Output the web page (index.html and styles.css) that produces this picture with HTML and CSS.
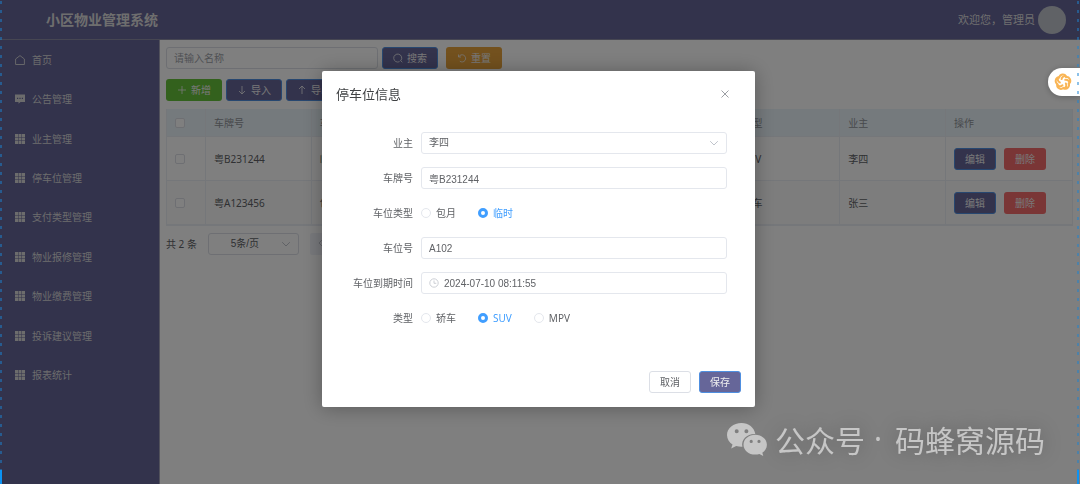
FILE: index.html
```html
<!DOCTYPE html>
<html lang="zh-CN">
<head>
<meta charset="utf-8">
<title>小区物业管理系统</title>
<link rel="stylesheet" href="styles.css">
</head>
<body>
<svg class="sprite" aria-hidden="true">
  <symbol id="grid" viewBox="0 0 10 10"><path fill="currentColor" d="M0 0h3v3H0zM3.5 0h3v3h-3zM7 0h3v3H7zM0 3.5h3v3H0zM3.5 3.5h3v3h-3zM7 3.5h3v3H7zM0 7h3v3H0zM3.5 7h3v3h-3zM7 7h3v3H7z"/></symbol>
  <symbol id="chevron" viewBox="0 0 10 10"><path d="M1.2 3.2 5 7l3.800-3.800" fill="none" stroke="currentColor"/></symbol>
</svg>
<div class="app">
  <header class="topbar">
    <h1 class="brand">小区物业管理系统</h1>
    <div class="user"><span>欢迎您，管理员</span><span class="avatar"></span></div>
  </header>
  <div class="body">
    <nav class="sidebar">
      <a href="#"><svg class="icon" viewBox="0 0 10 10"><path d="M.6 4 5 .6 9.400 4v5.500H.6z" fill="none" stroke="currentColor" stroke-width=".9" stroke-linejoin="round"/></svg>首页</a>
      <a href="#"><svg class="icon" viewBox="0 0 10 10"><path fill="currentColor" fill-rule="evenodd" d="M0 .5h10V8H5.500L3.500 9.800V8H0zM2 3.800v1.200h1.200V3.800zm2.400 0v1.200h1.200V3.800zm2.400 0v1.200H8V3.800z"/></svg>公告管理</a>
      <a href="#"><svg class="icon"><use href="#grid"/></svg>业主管理</a>
      <a href="#"><svg class="icon"><use href="#grid"/></svg>停车位管理</a>
      <a href="#"><svg class="icon"><use href="#grid"/></svg>支付类型管理</a>
      <a href="#"><svg class="icon"><use href="#grid"/></svg>物业报修管理</a>
      <a href="#"><svg class="icon"><use href="#grid"/></svg>物业缴费管理</a>
      <a href="#"><svg class="icon"><use href="#grid"/></svg>投诉建议管理</a>
      <a href="#"><svg class="icon"><use href="#grid"/></svg>报表统计</a>
    </nav>
    <main class="main">
      <div class="search">
        <input class="field search-field" type="text" placeholder="请输入名称" aria-label="名称">
        <button class="btn primary wide" type="button"><svg class="icon" viewBox="0 0 10 10"><path d="M6.600 8.600A4 4 0 1 1 7.900 7.500M7.300 7.300 9.300 9.300" fill="none" stroke="currentColor" stroke-width=".8"/></svg>搜索</button>
        <button class="btn warning wide reset" type="button"><svg class="icon" viewBox="0 0 10 10"><path d="M1.500 1.500v2.500h2.500M1.800 3.800A3.600 3.600 0 1 1 2.800 8.200" fill="none" stroke="currentColor" stroke-width=".8"/></svg>重置</button>
      </div>
      <div class="tools">
        <button class="btn success wide" type="button"><svg class="icon" viewBox="0 0 10 10"><path d="M5 1v8M1 5h8" stroke="currentColor" stroke-width=".8"/></svg>新增</button>
        <button class="btn primary wide" type="button"><svg class="icon" viewBox="0 0 10 10"><path d="M5 1v8M2 6l3 3 3-3" fill="none" stroke="currentColor" stroke-width=".8"/></svg>导入</button>
        <button class="btn primary wide" type="button"><svg class="icon" viewBox="0 0 10 10"><path d="M5 9V1M2 4l3-3 3 3" fill="none" stroke="currentColor" stroke-width=".8"/></svg>导出</button>
      </div>
      <table class="table">
        <colgroup><col class="c-check"><col><col><col><col><col><col><col><col class="c-ops"></colgroup>
        <thead><tr><th><input type="checkbox" aria-label="全选"></th><th>车牌号</th><th>车位类型</th><th></th><th></th><th></th><th>类型</th><th>业主</th><th>操作</th></tr></thead>
        <tbody>
          <tr><td><input type="checkbox" aria-label="粤B231244"></td><td>粤B231244</td><td>临时</td><td></td><td></td><td></td><td>SUV</td><td>李四</td><td><div class="ops"><button class="btn primary" type="button">编辑</button><button class="btn danger" type="button">删除</button></div></td></tr>
          <tr><td><input type="checkbox" aria-label="粤A123456"></td><td>粤A123456</td><td>包月</td><td></td><td></td><td></td><td>轿车</td><td>张三</td><td><div class="ops"><button class="btn primary" type="button">编辑</button><button class="btn danger" type="button">删除</button></div></td></tr>
        </tbody>
      </table>
      <div class="pager">
        <span>共 2 条</span>
        <span class="select page-size"><select class="field" aria-label="每页条数"><option>5条/页</option></select><svg class="icon"><use href="#chevron"/></svg></span>
        <button class="prev" type="button" aria-label="上一页"><svg class="icon" viewBox="0 0 10 10"><path d="M6.500 1.500 3 5l3.500 3.500" fill="none" stroke="currentColor"/></svg></button>
      </div>
    </main>
  </div>
</div>

<div class="mask">
  <section class="dialog" role="dialog" aria-labelledby="dialog-title">
    <header class="dialog-head">
      <h2 id="dialog-title">停车位信息</h2>
      <button class="close" type="button" aria-label="关闭"><svg class="icon" viewBox="0 0 10 10"><path d="m1.500 1.500 7 7M8.500 1.500l-7 7" stroke="currentColor" stroke-width=".9"/></svg></button>
    </header>
    <form class="form">
      <label for="owner">业主</label>
      <span class="select"><select class="field" id="owner"><option>李四</option></select><svg class="icon"><use href="#chevron"/></svg></span>
      <label for="plate">车牌号</label>
      <input class="field" id="plate" type="text" value="粤B231244">
      <span class="label" id="space-type">车位类型</span>
      <div class="radios" role="radiogroup" aria-labelledby="space-type">
        <label><input type="radio" name="space">包月</label>
        <label><input type="radio" name="space" checked>临时</label>
      </div>
      <label for="space-no">车位号</label>
      <input class="field" id="space-no" type="text" value="A102">
      <label for="expire">车位到期时间</label>
      <span class="date"><input class="field" id="expire" type="text" value="2024-07-10 08:11:55"><svg class="icon" viewBox="0 0 10 10"><g fill="none" stroke="currentColor" stroke-width=".8"><circle cx="5" cy="5" r="4.200"/><path d="M5 2.500V5.300h2.300"/></g></svg></span>
      <span class="label" id="car-type">类型</span>
      <div class="radios" role="radiogroup" aria-labelledby="car-type">
        <label><input type="radio" name="car">轿车</label>
        <label><input type="radio" name="car" checked>SUV</label>
        <label><input type="radio" name="car">MPV</label>
      </div>
    </form>
    <footer class="dialog-foot">
      <button class="btn plain" type="button">取消</button>
      <button class="btn primary" type="button">保存</button>
    </footer>
  </section>
</div>

<div class="float">
  <svg viewBox="0 0 20 20"><g fill="none" stroke="#f9b555" stroke-width="2.200" stroke-linecap="round">
    <path id="petal" d="M5.800 5.200C6.500 1.200 11.500.6 13.400 3.600c-2.600-.6-4.600.7-5 3.200"/>
    <use href="#petal" transform="rotate(72 10 10)"/><use href="#petal" transform="rotate(144 10 10)"/><use href="#petal" transform="rotate(216 10 10)"/><use href="#petal" transform="rotate(288 10 10)"/>
  </g></svg>
</div>
<div class="edge edge-left"></div>
<div class="edge edge-right"></div>
<div class="watermark">
  <svg viewBox="0 0 40 33"><path fill="currentColor" fill-rule="evenodd" d="M14.500 0C6.500 0 0 5.200 0 12c0 3.900 2.200 7.300 5.500 9.600L4.200 25.500l5-2.500c1.700.5 3.500.8 5.300.8h.9C13.800 16.500 20 10.700 28.300 11 27.300 4.600 21.500 0 14.500 0zM9.700 6.200a2 2 0 1 1 0 4 2 2 0 0 1 0-4zm9.700 0a2 2 0 1 1 0 4 2 2 0 0 1 0-4z"/><path fill="currentColor" fill-rule="evenodd" d="M28.200 11.800c-6.600 0-11.700 4.400-11.700 9.900s5.100 9.900 11.700 9.900c1.500 0 2.900-.2 4.200-.6l3.900 2-1-3.300c2.800-1.900 4.600-4.700 4.600-8 0-5.500-5.100-9.900-11.700-9.900zM24.200 16.800a1.600 1.600 0 1 1 0 3.200 1.600 1.600 0 0 1 0-3.200zm7.800 0a1.600 1.600 0 1 1 0 3.200 1.600 1.600 0 0 1 0-3.200z"/></svg>
  <span>公众号</span><span class="dot">·</span><span>码蜂窝源码</span>
</div>
</body>
</html>
```

FILE: styles.css
```css
* { box-sizing: border-box; }

body {
  margin: 0;
  font: 10px/14px "Noto Sans", "Noto Sans CJK SC", sans-serif;
  color: #606266;
  background: #fff;
}

h1, h2 { margin: 0; }

button, input, select {
  margin: 0;
  font: inherit;
  color: inherit;
}

.sprite { position: absolute; width: 0; height: 0; }
.icon { width: 10px; height: 10px; flex: none; }

.app { min-height: 100vh; display: flex; flex-direction: column; }

.topbar {
  height: 40px;
  padding: 0 14px 0 46px;
  display: flex;
  align-items: center;
  justify-content: space-between;
  background: #669;
  border-bottom: 1px solid #8c8ca4;
  color: #fff;
}
.brand { font-size: 14px; line-height: 20px; color: #ddd; }
.user { display: flex; align-items: center; gap: 3px; font-size: 11px; color: #ddd; }
.avatar { width: 28px; height: 28px; border-radius: 50%; background: #c0c4cc; }

.body { flex: 1; display: flex; }

.sidebar {
  width: 160px;
  flex: none;
  display: grid;
  grid-template-rows: repeat(9, 1fr);
  padding-bottom: 89px;
  background: #669;
  border-right: 1px solid #a4a4b8;
}
.sidebar a {
  display: flex;
  align-items: center;
  gap: 7px;
  padding-left: 15px;
  color: #d8d8d8;
  text-decoration: none;
}

.main { flex: 1; min-width: 0; padding: 7px 7px 0 6px; }
.search, .tools { display: flex; gap: 4px; }
.search { margin-bottom: 10px; }
.tools { margin-bottom: 8px; }
.search-field { flex: 0 0 212px; }
.reset { margin-left: 4px; }

.field {
  width: 100%;
  height: 22px;
  padding: 0 7px;
  border: 1px solid #dcdfe6;
  border-radius: 3px;
  background: #fff;
  font-family: "Liberation Sans", "Noto Sans CJK SC", sans-serif;
  outline: none;
  appearance: none;
}
.field::placeholder { color: #a0a3aa; }

.btn {
  min-width: 42px;
  height: 22px;
  padding: 0;
  display: inline-flex;
  align-items: center;
  justify-content: center;
  gap: 4px;
  border: 1px solid transparent;
  border-radius: 3px;
  color: #f0f0f0;
}
.wide { width: 56px; }
.primary { background: #669; border-color: #4f8fe0; }
.success { background: #67c23a; }
.warning { background: #e6a23c; }
.danger { background: #f56c6c; }
.plain { background: #fff; border-color: #dcdfe6; color: #606266; }

.table {
  width: 100%;
  table-layout: fixed;
  border-collapse: separate;
  border-spacing: 0;
  border: 1px solid #ebeef5;
  border-width: 0 0 1px 1px;
}
.c-check { width: 39px; }
.c-ops { width: 127px; }
.table th, .table td {
  padding: 0 8px;
  text-align: left;
  border: 1px solid #ebeef5;
  border-width: 0 1px 1px 0;
}
.table th { height: 28px; background: #ebf5fb; color: #909399; font-weight: 400; }
.table td { height: 44px; }
.table tr:nth-child(2) td { background: #fafafa; }
.ops { display: flex; gap: 8px; }

input[type="checkbox"] {
  display: block;
  width: 10px;
  height: 10px;
  appearance: none;
  border: 1px solid #dcdfe6;
  border-radius: 2px;
  background: #fff;
}

.pager { display: flex; align-items: center; gap: 11px; margin-top: 7px; }
.select, .date { position: relative; display: block; color: #606266; }
.select .icon { position: absolute; right: 8px; top: 6px; color: #c0c4cc; pointer-events: none; }
.page-size { width: 91px; }
.page-size .field { padding-right: 24px; text-align: center; text-align-last: center; }
.prev {
  width: 22px;
  height: 22px;
  padding: 0;
  border: 0;
  border-radius: 2px;
  background: #f0f2f8;
  color: #c0c4cc;
}

.mask {
  position: fixed;
  inset: 0;
  padding-top: 71px;
  padding-right: 3px;
  background: rgba(0, 0, 0, .5);
}
.dialog {
  width: 433px;
  margin: 0 auto;
  background: #fff;
  border-radius: 2px;
  box-shadow: 0 1px 20px rgba(0, 0, 0, .3);
}
.dialog-head {
  display: flex;
  align-items: center;
  justify-content: space-between;
  padding: 14px 25px 0 14px;
}
.dialog-head h2 { font-size: 13px; line-height: 18px; font-weight: 400; color: #404244; }
.close { display: flex; padding: 0; border: 0; background: none; color: #909399; }

.form {
  display: grid;
  grid-template-columns: 91px 1fr;
  grid-auto-rows: 22px;
  align-items: center;
  gap: 13px 8px;
  padding: 29px 28px 42px 0;
}
.form > label, .form > .label { text-align: right; }
.form .field { border-color: #e4e7ed; }
.date .field { padding-left: 22px; }
.date .icon { position: absolute; left: 8px; top: 6px; color: #c0c4cc; }

.radios { display: flex; gap: 22px; }
.radios label { display: flex; align-items: center; gap: 5px; }
.radios input {
  width: 10px;
  height: 10px;
  appearance: none;
  border: 1px solid #e4e7ed;
  border-radius: 50%;
  background: #fff;
}
.radios input:checked { border: 3px solid #409eff; }
.radios label:has(:checked) { color: #409eff; }

.dialog-foot { display: flex; justify-content: flex-end; gap: 8px; padding: 0 14px 14px; }

.float {
  position: fixed;
  right: 0;
  top: 68px;
  width: 32px;
  height: 28px;
  padding: 5px 6px;
  border-radius: 14px 0 0 14px;
  background: #fff;
  box-shadow: 0 1px 6px rgba(0, 0, 0, .25);
}
.float svg { display: block; width: 18px; height: 18px; }

.edge {
  position: fixed;
  top: 0;
  bottom: 0;
  width: 2px;
  background:
    linear-gradient(#0b93f5, #0b93f5) bottom / 100% 14px no-repeat,
    repeating-linear-gradient(transparent 0 1px, rgba(28, 132, 210, .5) 1px 4px, transparent 4px 9px);
}
.edge-left { left: 0; }
.edge-right { right: 1px; }

.watermark {
  position: fixed;
  right: 35px;
  bottom: 23px;
  display: flex;
  align-items: center;
  color: #c6c6c6;
  font: 400 30px/44px "Noto Sans CJK SC", sans-serif;
  text-shadow: 0 0 20px rgba(0, 0, 0, .3);
}
.watermark svg { width: 40px; height: 33px; margin-right: 8px; }
.dot { width: 30px; padding-left: 9px; font-family: "Noto Sans", sans-serif; }
```
